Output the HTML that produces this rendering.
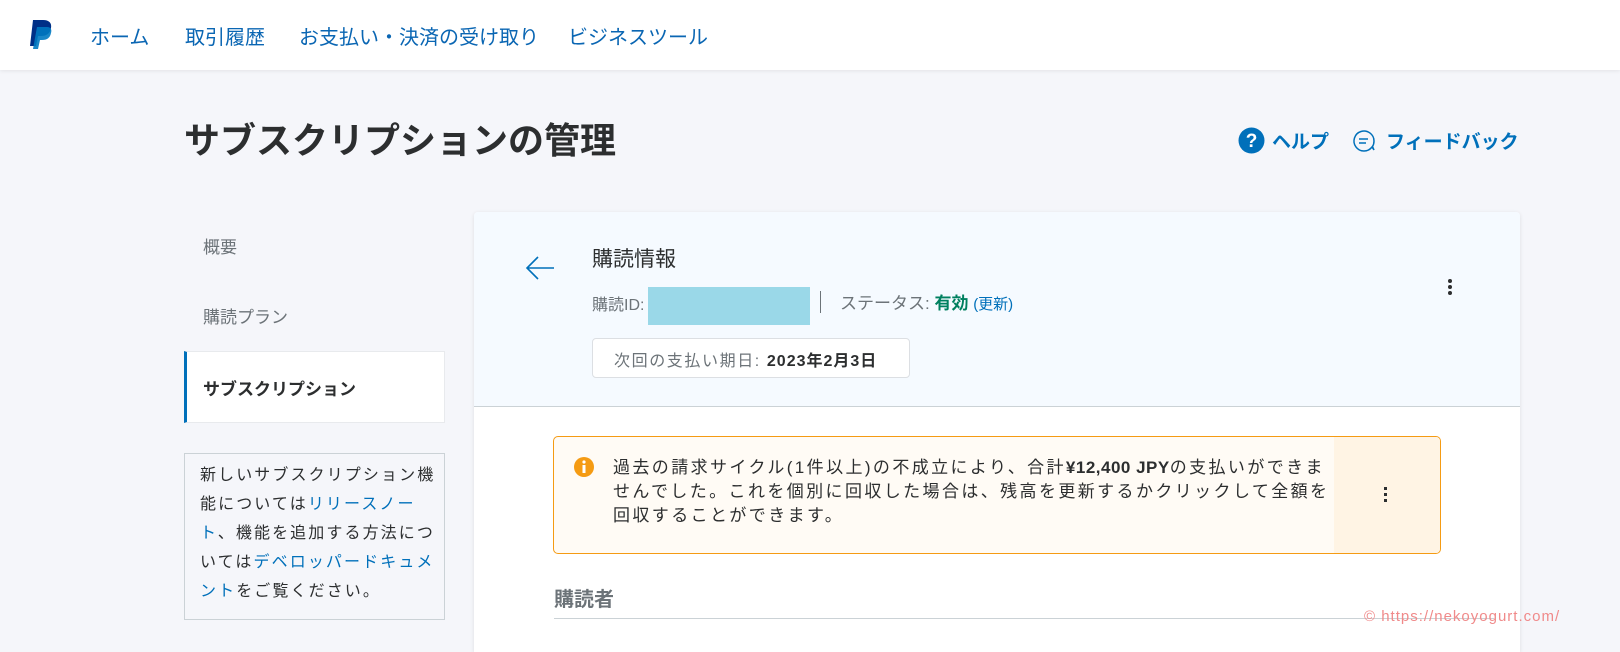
<!DOCTYPE html><html><head><meta charset="utf-8"><style>
*{margin:0;padding:0;box-sizing:border-box}
body{width:1620px;height:652px;overflow:hidden;background:#f5f6fa;font-family:"Liberation Sans","Noto Sans CJK JP",sans-serif;color:#2c2e2f;position:relative}
.a{position:absolute;white-space:nowrap}
header{position:absolute;left:0;top:0;width:1620px;height:70px;background:#fff;box-shadow:0 1px 4px rgba(0,0,0,.08)}
.nav{font-size:20px;color:#0a66b3;top:21px}
.blue{color:#0070ba}
</style></head><body>
<header>
<svg class="a" style="left:27px;top:19px" width="26" height="30" viewBox="0 0 26 30"><path d="M6 1h10c6 0 9 3 8 8-1 6-5 8-10 8h-3l-2 10H3z" fill="#003087"/><path d="M10 8h10c4 0 5 3 4 6-1 5-4 7-9 7h-2l-2 9H6z" fill="#0079c1" opacity=".9"/></svg>
<div class="a nav" style="left:90px">ホーム</div>
<div class="a nav" style="left:185px">取引履歴</div>
<div class="a nav" style="left:299px">お支払い・決済の受け取り</div>
<div class="a nav" style="left:568px">ビジネスツール</div>
</header>
<div class="a" style="left:184px;top:112px;font-size:36px;font-weight:bold;color:#2c2e2f">サブスクリプションの管理</div>
<svg class="a" style="left:1238px;top:127px" width="27" height="27" viewBox="0 0 27 27"><circle cx="13.5" cy="13.5" r="13" fill="#0070ba"/><text x="13.5" y="20" font-size="19" font-weight="bold" fill="#fff" text-anchor="middle" font-family="Liberation Sans">?</text></svg>
<div class="a blue" style="left:1272px;top:127px;font-size:19px;font-weight:bold">ヘルプ</div>
<svg class="a" style="left:1352px;top:129px" width="24" height="24" viewBox="0 0 24 24"><path d="M20 18A10 10 0 1 1 22 12c0 2-.5 4-1.5 5.5L22 21z" fill="none" stroke="#0070ba" stroke-width="1.5"/><path d="M7 10h9M7 14h7" stroke="#0070ba" stroke-width="1.5"/></svg>
<div class="a blue" style="left:1386px;top:127px;font-size:19px;font-weight:bold">フィードバック</div>

<div class="a" style="left:203px;top:233px;font-size:17px;color:#6c7378">概要</div>
<div class="a" style="left:203px;top:303px;font-size:17px;color:#6c7378">購読プラン</div>
<div class="a" style="left:184px;top:351px;width:261px;height:72px;background:#fff;border:1px solid #e8eaed;border-left:3px solid #0070ba"></div>
<div class="a" style="left:203px;top:375px;font-size:17px;font-weight:bold">サブスクリプション</div>
<div class="a" style="left:184px;top:453px;width:261px;height:167px;border:1px solid #cbd2d6"></div>
<div class="a" style="left:200px;top:461px;font-size:16px;line-height:29px;letter-spacing:2.1px;color:#2c2e2f">新しいサブスクリプション機<br>能については<span class="blue">リリースノー</span><br><span class="blue">ト</span>、機能を追加する方法につ<br>いては<span class="blue">デベロッパードキュメ</span><br><span class="blue">ント</span>をご覧ください。</div>

<div class="a" style="left:474px;top:212px;width:1046px;height:440px;background:#fff;box-shadow:0 1px 4px rgba(0,0,0,.1);border-radius:4px 4px 0 0"></div>
<div class="a" style="left:474px;top:212px;width:1046px;height:195px;background:#f5faff;border-bottom:1px solid #cbd2d6;border-radius:4px 4px 0 0"></div>
<svg class="a" style="left:524px;top:255px" width="32" height="26" viewBox="0 0 32 26"><path d="M30 13H3M14 2L3 13l11 11" fill="none" stroke="#0070ba" stroke-width="1.6"/></svg>
<div class="a" style="left:592px;top:243px;font-size:21px">購読情報</div>
<div class="a" style="left:592px;top:291px;font-size:16px;color:#6c7378">購読ID:</div>
<div class="a" style="left:648px;top:287px;width:162px;height:38px;background:#9ad8e8"></div>
<div class="a" style="left:820px;top:291px;width:1px;height:22px;background:#6c7378"></div>
<div class="a" style="left:840px;top:289px;font-size:17px;color:#6c7378">ステータス: <b style="color:#00805f">有効</b> <span class="blue" style="font-size:15px">(更新)</span></div>
<div class="a" style="left:592px;top:338px;width:318px;height:40px;background:#fff;border:1px solid #dcdfe3;border-radius:4px;padding:8px 0 0 21px;font-size:16px;letter-spacing:1.6px;color:#6c7378">次回の支払い期日: <b style="color:#2c2e2f;letter-spacing:1px">2023年2月3日</b></div>
<div class="a" style="left:1448px;top:279px;width:4px;font-size:0"><div style="width:4px;height:4px;border-radius:2px;background:#2c2e2f;margin-bottom:2px"></div><div style="width:4px;height:4px;border-radius:2px;background:#2c2e2f;margin-bottom:2px"></div><div style="width:4px;height:4px;border-radius:2px;background:#2c2e2f"></div></div>

<div class="a" style="left:553px;top:436px;width:888px;height:118px;background:#fffbf5;border:1px solid #f59b13;border-radius:5px;overflow:hidden"><div style="position:absolute;right:0;top:0;width:106px;height:118px;background:#fff4e4"></div></div>
<svg class="a" style="left:574px;top:457px" width="20" height="20" viewBox="0 0 20 20"><circle cx="10" cy="10" r="10" fill="#f59b13"/><circle cx="10" cy="5" r="1.6" fill="#fff"/><rect x="8.5" y="8" width="3" height="8" fill="#fff"/></svg>
<div class="a" style="left:613px;top:456px;font-size:17px;line-height:24px;letter-spacing:2.4px">過去の請求サイクル(1件以上)の不成立により、合計<b style="letter-spacing:.5px">¥12,400 JPY</b>の支払いができま<br>せんでした。これを個別に回収した場合は、残高を更新するかクリックして全額を<br>回収することができます。</div>
<div class="a" style="left:1384px;top:487px;width:4px;font-size:0"><div style="width:3px;height:3px;background:#2c2e2f;margin-bottom:3px"></div><div style="width:3px;height:3px;background:#2c2e2f;margin-bottom:3px"></div><div style="width:3px;height:3px;background:#2c2e2f"></div></div>
<div class="a" style="left:554px;top:583px;font-size:20px;font-weight:bold;color:#6c7378">購読者</div>
<div class="a" style="left:554px;top:618px;width:940px;height:1px;background:#cbd2d6"></div>
<div class="a" style="left:1364px;top:608px;font-size:15px;letter-spacing:1px;color:#f08a8a">© https://nekoyogurt.com/</div>
</body></html>
